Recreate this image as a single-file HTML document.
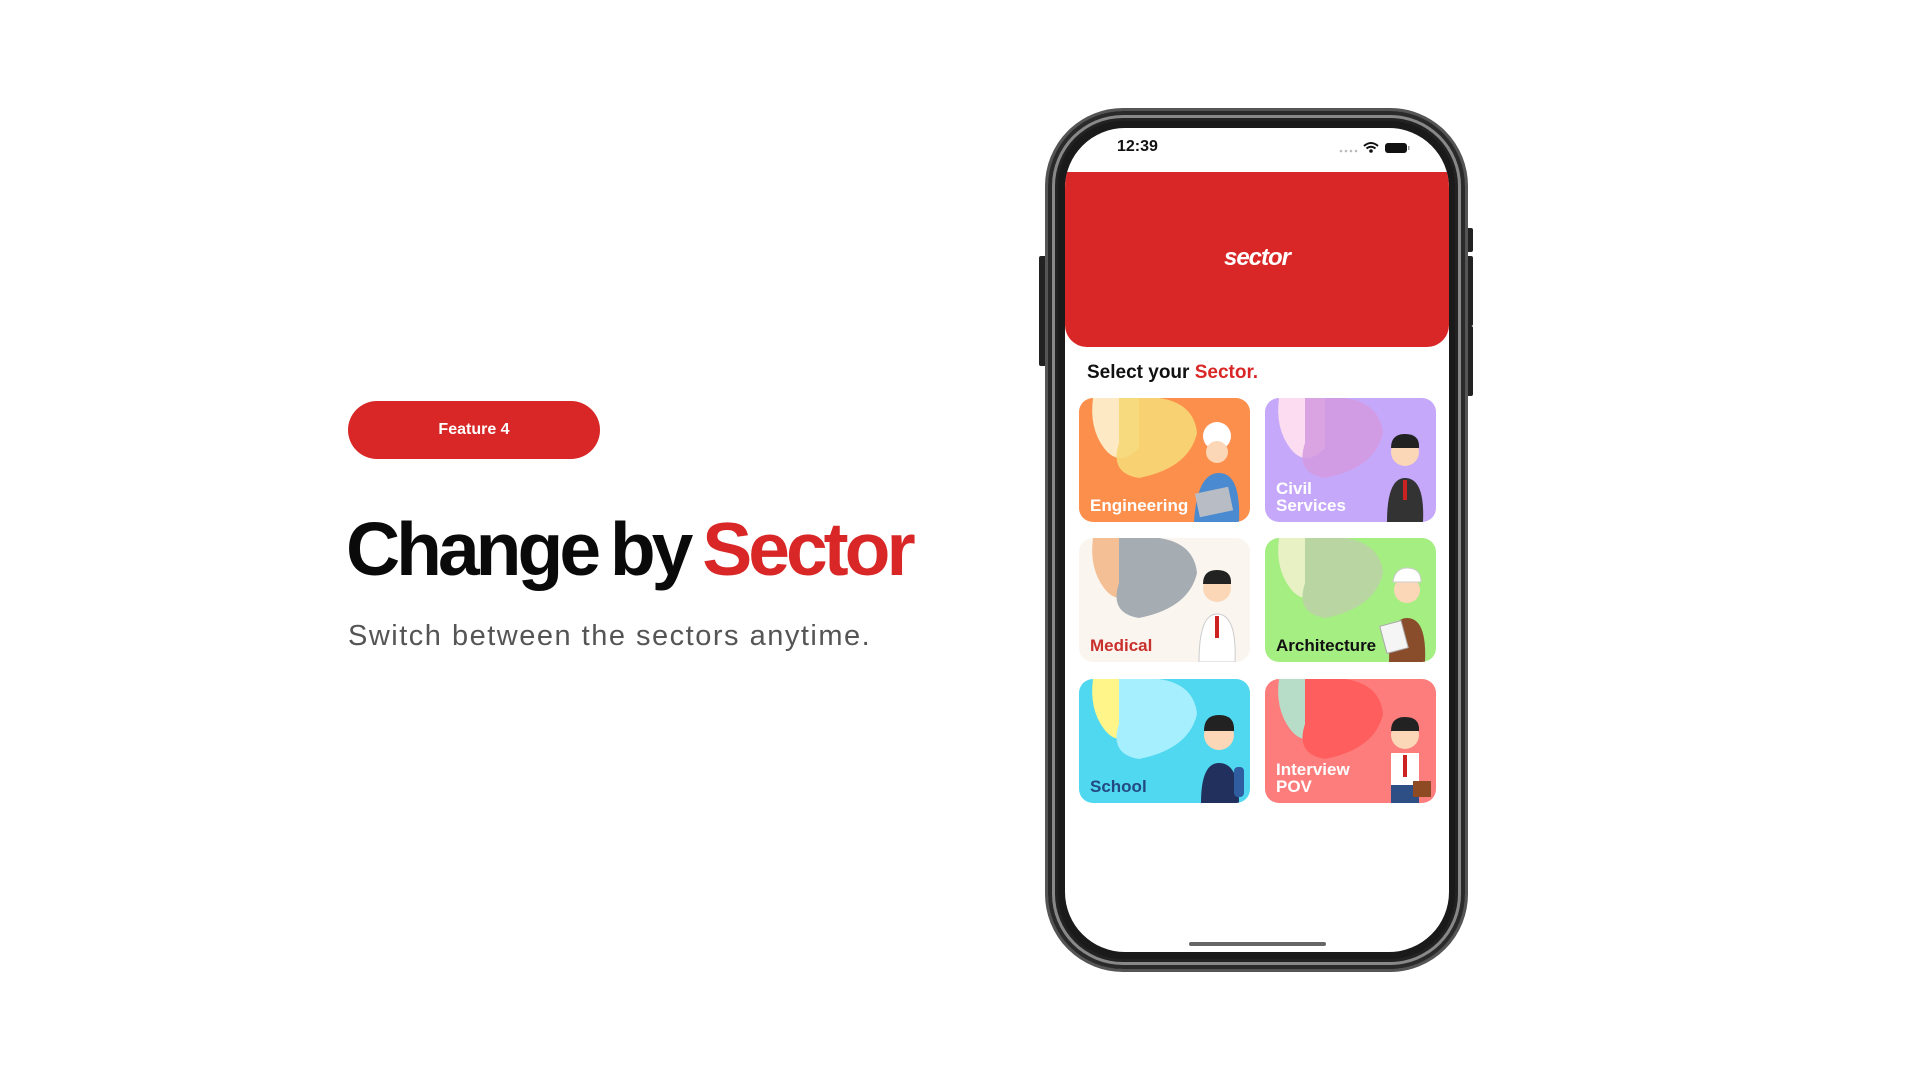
<!DOCTYPE html>
<html><head><meta charset="utf-8"><style>
*{margin:0;padding:0;box-sizing:border-box}
body{width:1920px;height:1080px;background:#fff;position:relative;overflow:hidden;font-family:"Liberation Sans",sans-serif}
.pill{position:absolute;left:348px;top:401px;width:252px;height:58px;border-radius:29px;background:#d92727;color:#fff;font-weight:bold;font-size:16px;text-align:center;line-height:58px}
h1{position:absolute;left:346px;top:504px;font-size:75px;font-weight:bold;letter-spacing:-4px;word-spacing:-4px;color:#0a0a0a;white-space:nowrap;line-height:90px}
h1 span{color:#d92727}
.sub{position:absolute;left:348px;top:620px;font-size:29px;color:#555;letter-spacing:1.5px;white-space:nowrap}
.phone{position:absolute;left:1045px;top:108px;width:423px;height:864px;border-radius:78px;background:#1a1a1a;border:3px solid #555;box-shadow:inset 0 0 0 4px #2a2a2a,inset 0 0 0 7px #888,inset 0 0 0 10px #222}
.btn{position:absolute;background:#222;border-radius:2px}
.screen{position:absolute;left:1065px;top:128px;width:384px;height:824px;border-radius:60px;background:#fff;overflow:hidden}
.hdr{position:absolute;left:0;top:44px;width:384px;height:175px;background:#d92727;border-radius:0 0 22px 22px}
.logo{position:absolute;left:0;width:100%;top:72px;text-align:center;color:#fff;font-size:24px;font-style:italic;font-weight:bold;letter-spacing:-1px}
.time{position:absolute;left:52px;top:10px;font-size:16px;font-weight:bold;color:#111}
.sel{position:absolute;left:22px;top:234px;font-size:19px;font-weight:bold;color:#111}
.sel span{color:#d92727}
.card{position:absolute;width:171px;height:124px;border-radius:14px;overflow:hidden}
.card .lbl{position:absolute;left:11px;bottom:8px;font-size:17px;font-weight:bold;line-height:17px}
.home{position:absolute;left:124px;top:814px;width:137px;height:4px;border-radius:2px;background:#666}
</style></head><body>
<div class="pill">Feature 4</div>
<h1>Change by <span>Sector</span></h1>
<div class="sub">Switch between the sectors anytime.</div>

<div class="btn" style="left:1039px;top:256px;width:8px;height:110px"></div>
<div class="btn" style="left:1466px;top:228px;width:7px;height:24px"></div>
<div class="btn" style="left:1466px;top:256px;width:7px;height:70px"></div>
<div class="btn" style="left:1466px;top:326px;width:7px;height:70px"></div>
<div class="phone"></div>
<div class="screen">
  <div class="time">12:39</div>
  <svg style="position:absolute;left:272px;top:12px" width="100" height="16">
    <g fill="#bbb"><circle cx="4" cy="11" r="1.3"/><circle cx="9" cy="11" r="1.3"/><circle cx="14" cy="11" r="1.3"/><circle cx="19" cy="11" r="1.3"/></g>
    <path d="M27 6 Q34 0 41 6 M29.5 8.5 Q34 5 38.5 8.5" stroke="#111" stroke-width="2" fill="none"/><circle cx="34" cy="11" r="1.8" fill="#111"/>
    <rect x="48" y="3" width="22" height="10" rx="3" fill="#111"/><rect x="71" y="6" width="1.5" height="4" fill="#999"/>
  </svg>
  <div class="hdr"><div class="logo">sector</div></div>
  <div class="sel">Select your <span>Sector.</span></div>

  <div class="card" style="left:14px;top:270px;background:#fd8f4c">
    <svg width="171" height="124"><path d="M14 0 H60 V50 Q40 70 25 50 Q10 30 14 0Z" fill="#fde9c4"/><path d="M40 45 Q30 75 60 80 Q110 70 118 35 Q115 5 80 0 H40Z" fill="#f6d877" opacity=".9"/>
    <circle cx="138" cy="38" r="14" fill="#fff"/><circle cx="138" cy="54" r="11" fill="#fbd7b7"/><path d="M115 124 Q118 75 140 75 Q162 75 160 124Z" fill="#4a8ad1"/><rect x="118" y="92" width="34" height="24" fill="#b8bcc4" transform="rotate(-12 135 104)"/></svg>
    <div class="lbl" style="color:#fff">Engineering</div></div>

  <div class="card" style="left:200px;top:270px;background:#c6a8fb">
    <svg width="171" height="124"><path d="M14 0 H60 V50 Q40 70 25 50 Q10 30 14 0Z" fill="#fbdcf0"/><path d="M40 45 Q30 75 60 80 Q110 70 118 35 Q115 5 80 0 H40Z" fill="#d49ae0" opacity=".85"/>
    <circle cx="140" cy="54" r="14" fill="#fbd7b7"/><path d="M126 50 Q126 36 140 36 Q155 36 154 50 Z" fill="#222"/><path d="M122 124 Q122 80 140 80 Q160 80 158 124Z" fill="#333"/><rect x="138" y="82" width="4" height="20" fill="#c22"/></svg>
    <div class="lbl" style="color:#fff">Civil<br>Services</div></div>

  <div class="card" style="left:14px;top:410px;background:#faf5ef">
    <svg width="171" height="124"><path d="M14 0 H60 V50 Q40 70 25 50 Q10 30 14 0Z" fill="#f4bf94"/><path d="M40 45 Q30 75 60 80 Q110 70 118 35 Q115 5 80 0 H40Z" fill="#a5adb3"/>
    <circle cx="138" cy="50" r="14" fill="#fbd7b7"/><path d="M124 46 Q124 32 138 32 Q153 32 152 46 Z" fill="#222"/><path d="M120 124 Q120 76 138 76 Q158 76 156 124Z" fill="#fff" stroke="#ccc"/><rect x="136" y="78" width="4" height="22" fill="#c22"/></svg>
    <div class="lbl" style="color:#c9302c">Medical</div></div>

  <div class="card" style="left:200px;top:410px;background:#a4ee82">
    <svg width="171" height="124"><path d="M14 0 H60 V50 Q40 70 25 50 Q10 30 14 0Z" fill="#e8f1c3"/><path d="M40 45 Q30 75 60 80 Q110 70 118 35 Q115 5 80 0 H40Z" fill="#b9d6a2"/>
    <circle cx="142" cy="52" r="13" fill="#fbd7b7"/><path d="M128 44 Q130 30 142 30 Q156 30 156 44Z" fill="#fff" stroke="#ccc"/><path d="M124 124 Q124 80 142 80 Q162 80 160 124Z" fill="#8a4d2c"/><rect x="118" y="85" width="22" height="28" fill="#f5f5f5" stroke="#aaa" transform="rotate(-15 129 99)"/></svg>
    <div class="lbl" style="color:#111">Architecture</div></div>

  <div class="card" style="left:14px;top:551px;background:#4fd8ef">
    <svg width="171" height="124"><path d="M14 0 H60 V50 Q40 70 25 50 Q10 30 14 0Z" fill="#fff588"/><path d="M40 45 Q30 75 60 80 Q110 70 118 35 Q115 5 80 0 H40Z" fill="#a6efff"/>
    <circle cx="140" cy="56" r="15" fill="#fbd7b7"/><path d="M125 52 Q125 36 140 36 Q156 36 155 52Z" fill="#222"/><path d="M122 124 Q122 84 140 84 Q160 84 160 124Z" fill="#22305e"/><rect x="155" y="88" width="10" height="30" rx="4" fill="#2f5da0"/></svg>
    <div class="lbl" style="color:#234a80">School</div></div>

  <div class="card" style="left:200px;top:551px;background:#fd7d7d">
    <svg width="171" height="124"><path d="M14 0 H60 V50 Q40 70 25 50 Q10 30 14 0Z" fill="#b7ddc9"/><path d="M40 45 Q30 75 60 80 Q110 70 118 35 Q115 5 80 0 H40Z" fill="#fe5e5e"/>
    <circle cx="140" cy="56" r="14" fill="#fbd7b7"/><path d="M126 52 Q126 38 140 38 Q155 38 154 52Z" fill="#222"/><rect x="126" y="74" width="28" height="32" fill="#fff"/><rect x="126" y="106" width="28" height="18" fill="#2d4f86"/><rect x="138" y="76" width="4" height="22" fill="#c22"/><rect x="148" y="102" width="18" height="16" fill="#8e4a22"/></svg>
    <div class="lbl" style="color:#fff">Interview<br>POV</div></div>

  <div class="home"></div>
</div>
</body></html>
